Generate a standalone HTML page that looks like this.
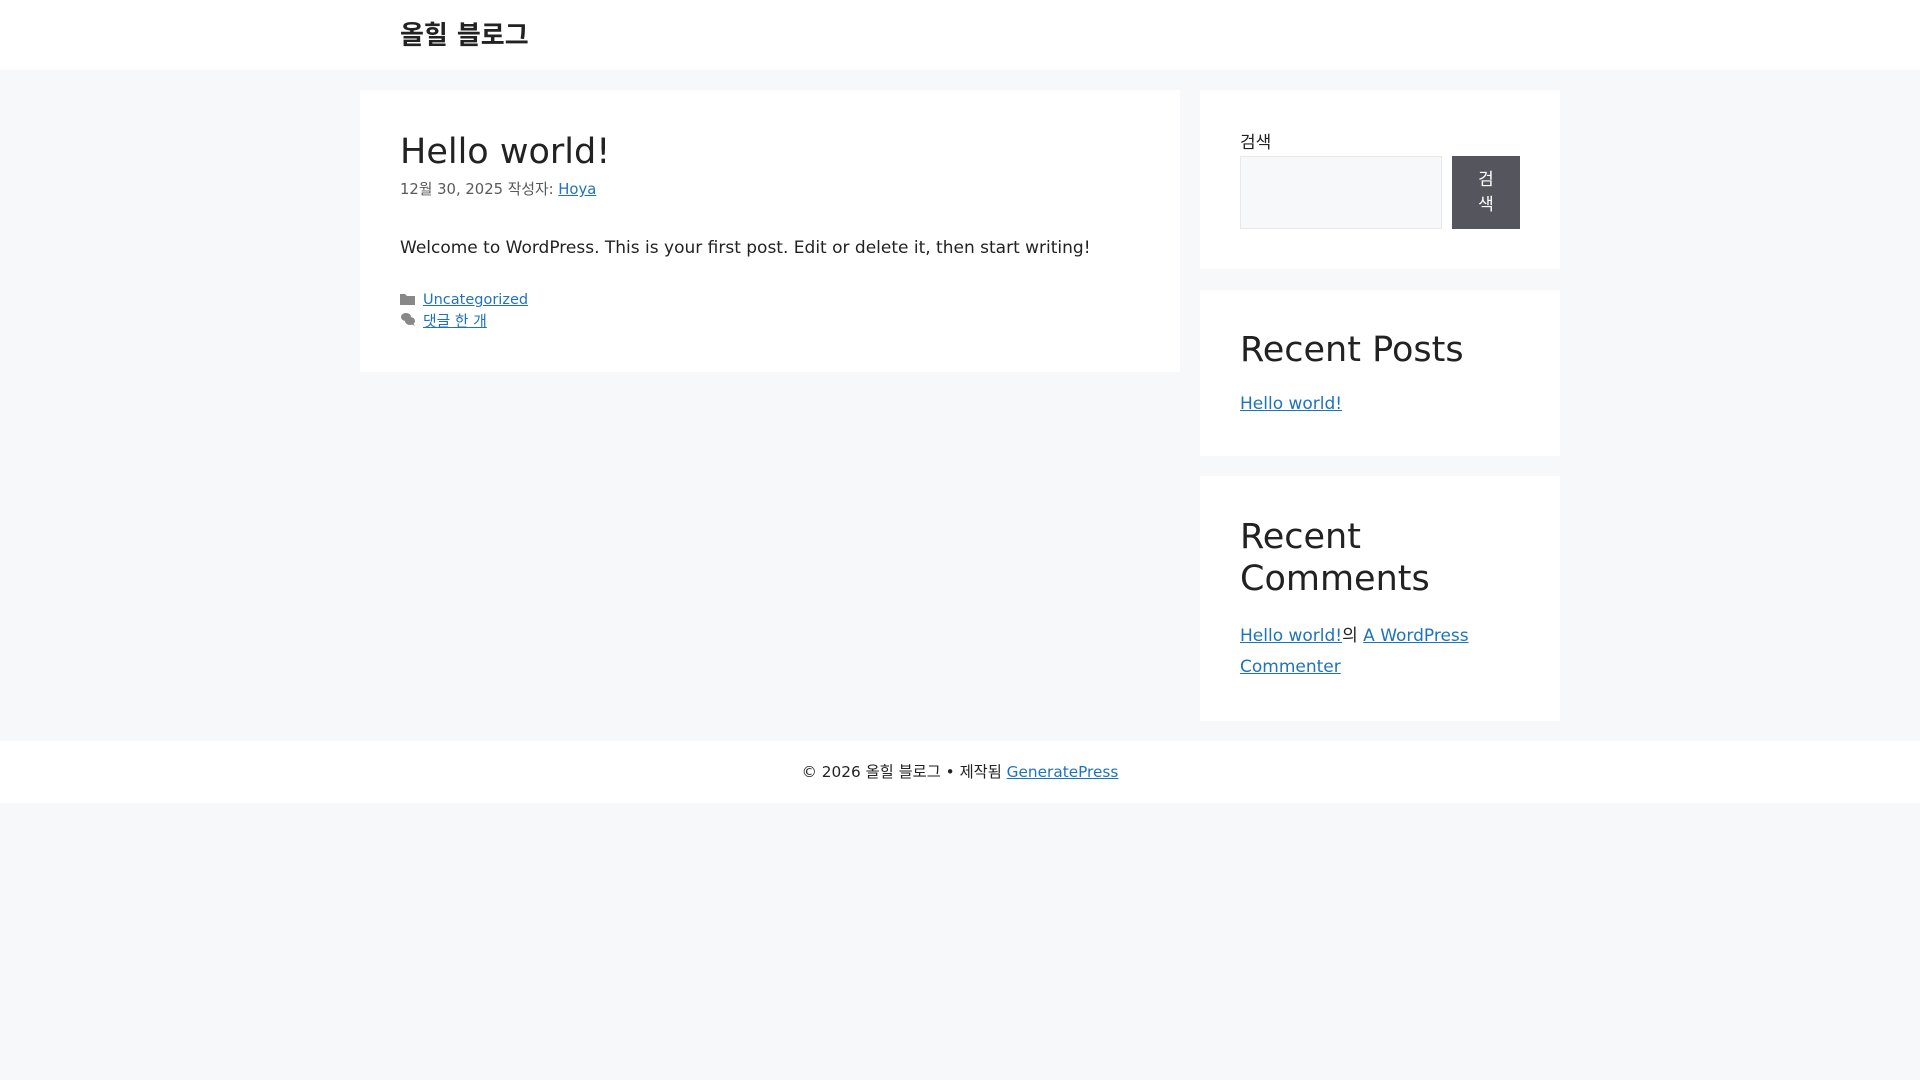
<!DOCTYPE html><html><head><meta charset="utf-8"><style>
*{margin:0;padding:0;box-sizing:border-box}
body{width:1920px;height:1080px;background:#f7f8f9;font-family:"DejaVu Sans","Noto Sans CJK KR",sans-serif;color:#222;position:relative;overflow:hidden}
a{color:#1e73be;text-decoration:underline}
.a{position:absolute;white-space:nowrap}
.box{position:absolute;background:#fff}
</style></head><body>
<div class="box" style="left:0;top:0;width:1920px;height:70px"></div>
<div class="a" style="left:400px;top:19px;font-size:26px;font-weight:bold;line-height:34px">올힐 블로그</div>
<div class="box" style="left:360px;top:90px;width:820px;height:282px"></div>
<div class="a" style="left:400px;top:127px;font-size:35px;line-height:50px">Hello world!</div>
<div class="a" style="left:400px;top:179px;font-size:14.8px;line-height:22px;color:#595959">12월 30, 2025 작성자: <a href="#">Hoya</a></div>
<div class="a" style="left:400px;top:235px;font-size:17px;line-height:26px">Welcome to WordPress. This is your first post. Edit or delete it, then start writing!</div>
<svg class="a" style="left:400px;top:292px" width="15" height="14" viewBox="0 0 15 14"><path d="M0 2h5l2 2h8v9H0z" fill="#888"/></svg>
<div class="a" style="left:423px;top:289px;font-size:14.5px;line-height:22px"><a href="#">Uncategorized</a></div>
<svg class="a" style="left:400px;top:312px" width="16" height="15" viewBox="0 0 16 15"><ellipse cx="6" cy="5" rx="5" ry="4" fill="#888"/><ellipse cx="10" cy="9" rx="5" ry="4" fill="#888"/><path d="M13 11l2 3-4-2z" fill="#888"/></svg>
<div class="a" style="left:423px;top:311px;font-size:14.8px;line-height:22px"><a href="#">댓글 한 개</a></div>

<div class="box" style="left:1200px;top:90px;width:360px;height:179px"></div>
<div class="a" style="left:1240px;top:132px;font-size:17px;line-height:22px">검색</div>
<div class="a" style="left:1240px;top:156px;width:202px;height:73px;background:#f7f8f9;border:1px solid #e8e8e8"></div>
<div class="a" style="left:1452px;top:156px;width:68px;height:73px;background:#55555e;color:#fff;font-size:17px;line-height:25px;text-align:center;padding-top:12px;white-space:normal">검<br>색</div>

<div class="box" style="left:1200px;top:290px;width:360px;height:166px"></div>
<div class="a" style="left:1240px;top:329px;font-size:35px;line-height:42px">Recent Posts</div>
<div class="a" style="left:1240px;top:391px;font-size:17px;line-height:26px"><a href="#">Hello world!</a></div>

<div class="box" style="left:1200px;top:476px;width:360px;height:245px"></div>
<div class="a" style="left:1240px;top:516px;font-size:35px;line-height:42px">Recent<br>Comments</div>
<div class="a" style="left:1240px;top:621px;font-size:17px;line-height:31px">
<a href="#">Hello world!</a>의 <a href="#">A WordPress</a><br><a href="#">Commenter</a></div>

<div class="box" style="left:0;top:741px;width:1920px;height:62px"></div>
<div class="a" style="left:0;width:1920px;top:761px;font-size:15.3px;line-height:22px;text-align:center;color:#222">© 2026 올힐 블로그 • 제작됨 <a href="#">GeneratePress</a></div>
</body></html>
